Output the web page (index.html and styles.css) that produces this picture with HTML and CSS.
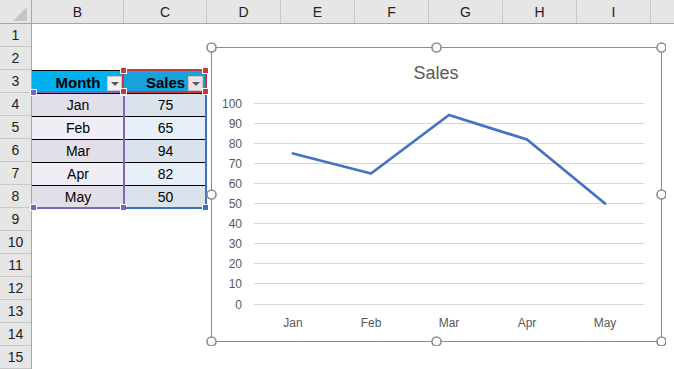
FILE: index.html
```html
<!DOCTYPE html>
<html lang="en">
<head>
  <meta charset="UTF-8" />
  <title>Sales chart</title>
  <link rel="stylesheet" href="styles.css">
</head>
<body>
  <div class="colbar">
    <div class="col corner"><span class="tri"></span></div>
    <div class="col w-b">B</div>
    <div class="col w-c">C</div>
    <div class="col">D</div>
    <div class="col">E</div>
    <div class="col">F</div>
    <div class="col">G</div>
    <div class="col">H</div>
    <div class="col">I</div>
    <div class="col last"></div>
  </div>

  <div class="main">
    <div class="rowbar">
      <div>1</div><div>2</div><div>3</div><div>4</div><div>5</div>
      <div>6</div><div>7</div><div>8</div><div>9</div><div>10</div>
      <div>11</div><div>12</div><div>13</div><div>14</div><div>15</div>
    </div>

    <div class="cells">
      <div class="data">
        <div class="cell head head-b">Month<span class="drop"></span></div>
        <div class="cell head head-c">Sales<span class="drop pink"></span></div>

        <div class="cell b dark">Jan</div><div class="cell c dark">75</div>
        <div class="cell b">Feb</div><div class="cell c">65</div>
        <div class="cell b dark">Mar</div><div class="cell c dark">94</div>
        <div class="cell b">Apr</div><div class="cell c">82</div>
        <div class="cell b dark">May</div><div class="cell c dark">50</div>
      </div>

      <!-- selection ranges -->
      <div class="sel-cat">
        <span class="knob k-tl"></span><span class="knob k-tr"></span>
        <span class="knob k-bl"></span><span class="knob k-br"></span>
      </div>
      <div class="sel-val"><span class="knob k-br"></span></div>
      <div class="sel-name">
        <span class="knob k-tl"></span><span class="knob k-tr"></span>
        <span class="knob k-bl"></span><span class="knob k-br"></span>
      </div>

      <div class="chart">
        <svg width="460" height="304" viewBox="0 0 460 304">
          <g transform="translate(5,5)">
            <rect x="0.5" y="0.5" width="450" height="294" fill="#fff" stroke="#8c8c8c" />
            <text class="title" x="225" y="32" text-anchor="middle">Sales</text>

            <g stroke="#d9d9d9" stroke-width="1">
              <line x1="43" x2="433" y1="56.5" y2="56.5" />
              <line x1="43" x2="433" y1="76.5" y2="76.5" />
              <line x1="43" x2="433" y1="96.5" y2="96.5" />
              <line x1="43" x2="433" y1="116.5" y2="116.5" />
              <line x1="43" x2="433" y1="136.5" y2="136.5" />
              <line x1="43" x2="433" y1="156.5" y2="156.5" />
              <line x1="43" x2="433" y1="176.5" y2="176.5" />
              <line x1="43" x2="433" y1="196.5" y2="196.5" />
              <line x1="43" x2="433" y1="216.5" y2="216.5" />
              <line x1="43" x2="433" y1="236.5" y2="236.5" />
              <line x1="43" x2="433" y1="257.5" y2="257.5" />
            </g>

            <g class="axis" text-anchor="end">
              <text x="31" y="61">100</text>
              <text x="31" y="81">90</text>
              <text x="31" y="101">80</text>
              <text x="31" y="121">70</text>
              <text x="31" y="141">60</text>
              <text x="31" y="161">50</text>
              <text x="31" y="181">40</text>
              <text x="31" y="201">30</text>
              <text x="31" y="221">20</text>
              <text x="31" y="241">10</text>
              <text x="31" y="262">0</text>
            </g>

            <g class="axis" text-anchor="middle">
              <text x="82" y="280">Jan</text>
              <text x="160" y="280">Feb</text>
              <text x="238" y="280">Mar</text>
              <text x="316" y="280">Apr</text>
              <text x="394" y="280">May</text>
            </g>

            <polyline points="82,106.5 160,126.5 238,68 316,92.5 394,156.5"
              fill="none" stroke="#4472c4" stroke-width="2.8"
              stroke-linecap="round" stroke-linejoin="round" />

            <g fill="#fff" stroke="#8c8c8c" stroke-width="1.6">
              <circle cx="0.5" cy="0.5" r="4.5" />
              <circle cx="225.5" cy="0.5" r="4.5" />
              <circle cx="450.5" cy="0.5" r="4.5" />
              <circle cx="0.5" cy="147.5" r="4.5" />
              <circle cx="450.5" cy="147.5" r="4.5" />
              <circle cx="0.5" cy="294.5" r="4.5" />
              <circle cx="225.5" cy="294.5" r="4.5" />
              <circle cx="450.5" cy="294.5" r="4.5" />
            </g>
          </g>
        </svg>
      </div>
    </div>
  </div>
</body>
</html>
```

FILE: styles.css
```css
body {
  margin: 0;
  width: 674px;
  height: 369px;
  overflow: hidden;
  background: #fff;
  font-family: "Liberation Sans", Arial, sans-serif;
  color: #000;
}

/* column letters */
.colbar {
  display: flex;
  height: 24px;
  background: #e6e6e6;
  border-bottom: 1px solid #a6a6a6;
  box-sizing: border-box;
}
.col {
  width: 74px;
  flex: none;
  border-right: 1px solid #c8c8c8;
  box-sizing: border-box;
  display: flex;
  align-items: center;
  justify-content: center;
  font-size: 14px;
  color: #222;
}
.col.corner {
  width: 32px;
  border-right-color: #a6a6a6;
  align-items: flex-end;
  justify-content: flex-end;
  padding: 0 4px 2px 0;
}
.col.w-b { width: 92px; }
.col.w-c { width: 83px; }
.col.last { flex: 1; border-right: none; }
.tri {
  width: 0;
  height: 0;
  border-left: 14px solid transparent;
  border-bottom: 14px solid #c4c4c4;
}

/* row numbers + cells */
.main {
  display: flex;
}
.rowbar {
  width: 32px;
  flex: none;
  background: #e6e6e6;
  border-right: 1px solid #a6a6a6;
  box-sizing: border-box;
}
.rowbar div {
  height: 23px;
  border-bottom: 1px solid #c8c8c8;
  box-sizing: border-box;
  display: flex;
  align-items: center;
  justify-content: center;
  font-size: 14px;
  color: #222;
}
.cells {
  position: relative;
  flex: 1;
  height: 345px;
}

.data {
  display: grid;
  grid-template-columns: 92px 83px;
  grid-auto-rows: 23px;
  width: 175px;
  margin-top: 46px;
}
.cell {
  position: relative;
  border-top: 1px solid #000;
  box-sizing: border-box;
  display: flex;
  align-items: center;
  justify-content: center;
  font-size: 14px;
}
.cell.head {
  font-weight: bold;
  font-size: 15px;
}
.head-b { background: #00b0f0; }
.head-c { background: #18a2dc; }
.cell.b { background: #f0edf7; }
.cell.b.dark { background: #e3dfe9; }
.cell.c { background: #e7eff9; }
.cell.c.dark { background: #dae2eb; }

.drop {
  position: absolute;
  right: 2px;
  top: 5px;
  width: 15px;
  height: 15px;
  box-sizing: border-box;
  background: #f2f2f2;
  border: 1px solid #c8c8c8;
}
.drop::after {
  content: "";
  position: absolute;
  left: 3px;
  top: 5px;
  border-left: 4px solid transparent;
  border-right: 4px solid transparent;
  border-top: 4px solid #595959;
}
.drop.pink { background: #efe1e7; right: 4px; }

/* selection outlines */
.sel-cat {
  position: absolute;
  left: 0;
  top: 67px;
  width: 93px;
  height: 118px;
  border-top: 2px solid #8062bf;
  border-right: 2px solid #8062bf;
  border-bottom: 2px solid #8062bf;
  box-sizing: border-box;
}
.sel-val {
  position: absolute;
  left: 93px;
  top: 69px;
  width: 82px;
  height: 116px;
  border-right: 2px solid #3a70c9;
  border-bottom: 2px solid #3a70c9;
  box-sizing: border-box;
}
.sel-name {
  position: absolute;
  left: 90px;
  top: 45px;
  width: 85px;
  height: 24px;
  border: 2px solid #c9363d;
  box-sizing: border-box;
}
.knob {
  position: absolute;
  width: 5px;
  height: 5px;
  border: 1px solid #fff;
  background: #8062bf;
}
.sel-val .knob { background: #3a70c9; }
.sel-name .knob { background: #c9363d; }
.k-tl { left: -4px; top: -4px; }
.k-tr { right: -4px; top: -4px; }
.k-bl { left: -4px; bottom: -4px; }
.k-br { right: -4px; bottom: -4px; }
.sel-cat .k-tl, .sel-cat .k-bl { left: -2px; }

/* chart object */
.chart {
  position: absolute;
  left: 174px;
  top: 18px;
}
.chart svg {
  display: block;
}
.title {
  font-family: "Liberation Sans", Arial, sans-serif;
  font-size: 18px;
  fill: #595959;
}
.axis text {
  font-family: "Liberation Sans", Arial, sans-serif;
  font-size: 12px;
  fill: #595959;
}
```
